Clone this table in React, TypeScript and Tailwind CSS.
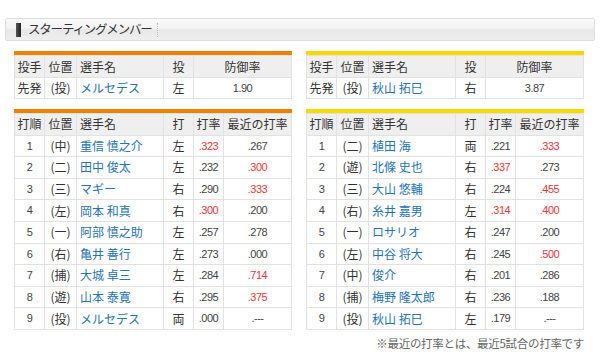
import React from 'react';

type Bat = { no: number; pos: string; name: string; hand: string; avg: string; avgHot?: boolean; recent: string; recentHot?: boolean };

const cjk = "font-['Noto_Sans_CJK_JP','Liberation_Sans',sans-serif]";
const num = "font-['Liberation_Sans',Arial,sans-serif] text-[11px] tracking-[-0.5px] text-[#444]";

const giants: Bat[] = [
  { no: 1, pos: '(中)', name: '重信 慎之介', hand: '左', avg: '.323', avgHot: true, recent: '.267' },
  { no: 2, pos: '(二)', name: '田中 俊太', hand: '左', avg: '.232', recent: '.300', recentHot: true },
  { no: 3, pos: '(三)', name: 'マギー', hand: '右', avg: '.290', recent: '.333', recentHot: true },
  { no: 4, pos: '(左)', name: '岡本 和真', hand: '右', avg: '.300', avgHot: true, recent: '.200' },
  { no: 5, pos: '(一)', name: '阿部 慎之助', hand: '左', avg: '.257', recent: '.278' },
  { no: 6, pos: '(右)', name: '亀井 善行', hand: '左', avg: '.273', recent: '.000' },
  { no: 7, pos: '(捕)', name: '大城 卓三', hand: '左', avg: '.284', recent: '.714', recentHot: true },
  { no: 8, pos: '(遊)', name: '山本 泰寛', hand: '右', avg: '.295', recent: '.375', recentHot: true },
  { no: 9, pos: '(投)', name: 'メルセデス', hand: '両', avg: '.000', recent: '.---' },
];

const tigers: Bat[] = [
  { no: 1, pos: '(二)', name: '植田 海', hand: '両', avg: '.221', recent: '.333', recentHot: true },
  { no: 2, pos: '(遊)', name: '北條 史也', hand: '右', avg: '.337', avgHot: true, recent: '.273' },
  { no: 3, pos: '(三)', name: '大山 悠輔', hand: '右', avg: '.224', recent: '.455', recentHot: true },
  { no: 4, pos: '(右)', name: '糸井 嘉男', hand: '左', avg: '.314', avgHot: true, recent: '.400', recentHot: true },
  { no: 5, pos: '(一)', name: 'ロサリオ', hand: '右', avg: '.247', recent: '.200' },
  { no: 6, pos: '(左)', name: '中谷 将大', hand: '右', avg: '.245', recent: '.500', recentHot: true },
  { no: 7, pos: '(中)', name: '俊介', hand: '右', avg: '.201', recent: '.286' },
  { no: 8, pos: '(捕)', name: '梅野 隆太郎', hand: '右', avg: '.236', recent: '.188' },
  { no: 9, pos: '(投)', name: '秋山 拓巳', hand: '左', avg: '.179', recent: '.---' },
];

const th = 'border border-[#e2e2e2] bg-[#efefef] font-normal text-[#333] text-[12px] p-0 text-center';
const td = 'border border-[#e2e2e2] bg-white p-0 text-center';

const PitcherTable = ({ bar, name, hand, era }: { bar: string; name: string; hand: string; era: string }) => (
  <div className="w-[278px]">
    <div className={`h-[4px] ${bar}`} />
    <table className={`w-full table-fixed border-collapse ${cjk}`}>
      <colgroup>
        <col className="w-[30px]" />
        <col className="w-[32px]" />
        <col className="w-[87px]" />
        <col className="w-[30px]" />
        <col />
      </colgroup>
      <thead>
        <tr className="h-[22px]">
          <th className={th}>投手</th>
          <th className={th}>位置</th>
          <th className={`${th} text-left pl-[3px]`}>選手名</th>
          <th className={th}>投</th>
          <th className={th}>防御率</th>
        </tr>
      </thead>
      <tbody>
        <tr className="h-[21px]">
          <td className={`${td} text-[12px] text-[#333]`}>先発</td>
          <td className={`${td} text-[12px] text-[#333]`}>(投)</td>
          <td className={`${td} text-left pl-[3px] text-[12px] text-[#2474c0]`}>{name}</td>
          <td className={`${td} text-[12px] text-[#333]`}>{hand}</td>
          <td className={`${td} ${num}`}>{era}</td>
        </tr>
      </tbody>
    </table>
  </div>
);

const LineupTable = ({ bar, rows }: { bar: string; rows: Bat[] }) => (
  <div className="w-[278px]">
    <div className={`h-[4px] ${bar}`} />
    <table className={`w-full table-fixed border-collapse ${cjk}`}>
      <colgroup>
        <col className="w-[30px]" />
        <col className="w-[32px]" />
        <col className="w-[87px]" />
        <col className="w-[30px]" />
        <col className="w-[30px]" />
        <col />
      </colgroup>
      <thead>
        <tr className="h-[21.6px]">
          <th className={th}>打順</th>
          <th className={th}>位置</th>
          <th className={`${th} text-left pl-[3px]`}>選手名</th>
          <th className={th}>打</th>
          <th className={th}>打率</th>
          <th className={th}>最近の打率</th>
        </tr>
      </thead>
      <tbody>
        {rows.map((r) => (
          <tr key={r.no} className="h-[21.6px]">
            <td className={`${td} ${num}`}>{r.no}</td>
            <td className={`${td} text-[12px] text-[#333]`}>{r.pos}</td>
            <td className={`${td} text-left pl-[3px] text-[12px] text-[#2474c0]`}>{r.name}</td>
            <td className={`${td} text-[12px] text-[#333]`}>{r.hand}</td>
            <td className={`${td} ${num} ${r.avgHot ? 'text-[#ff3333]' : ''}`}>{r.avg}</td>
            <td className={`${td} ${num} ${r.recentHot ? 'text-[#ff3333]' : ''}`}>{r.recent}</td>
          </tr>
        ))}
      </tbody>
    </table>
  </div>
);

export default function App() {
  return (
    <div className="w-[600px] h-[358px] bg-white overflow-hidden pt-[18px]">
      <div className="mx-[5px] h-[23px] border border-[#dddddd] rounded-[2px] bg-[linear-gradient(to_bottom,#fafafa,#f1f1f1_50%,#e8e8e8_50%,#eeeeee)] flex items-center pl-[10px]">
        <div className="w-[5px] h-[14px] bg-[linear-gradient(to_right,#555,#222)]" />
        <span className={`${cjk} ml-[7px] text-[12.5px] tracking-[-1.2px] text-[#333]`}>スターティングメンバー</span>
        <div className="ml-[5px] h-[14px] border-l border-dotted border-[#bbbbbb]" />
      </div>

      <div className="flex gap-[14px] px-[14px] mt-[10px]">
        <PitcherTable bar="bg-[#ef8200]" name="メルセデス" hand="左" era="1.90" />
        <PitcherTable bar="bg-[#fbd800]" name="秋山 拓巳" hand="右" era="3.87" />
      </div>

      <div className="flex gap-[14px] px-[14px] mt-[10px]">
        <LineupTable bar="bg-[#ef8200]" rows={giants} />
        <LineupTable bar="bg-[#fbd800]" rows={tigers} />
      </div>

      <div className={`${cjk} text-right pr-[16px] mt-[5px] text-[11.5px] tracking-[-0.3px] text-[#666]`}>
        ※最近の打率とは、最近5試合の打率です
      </div>
    </div>
  );
}
